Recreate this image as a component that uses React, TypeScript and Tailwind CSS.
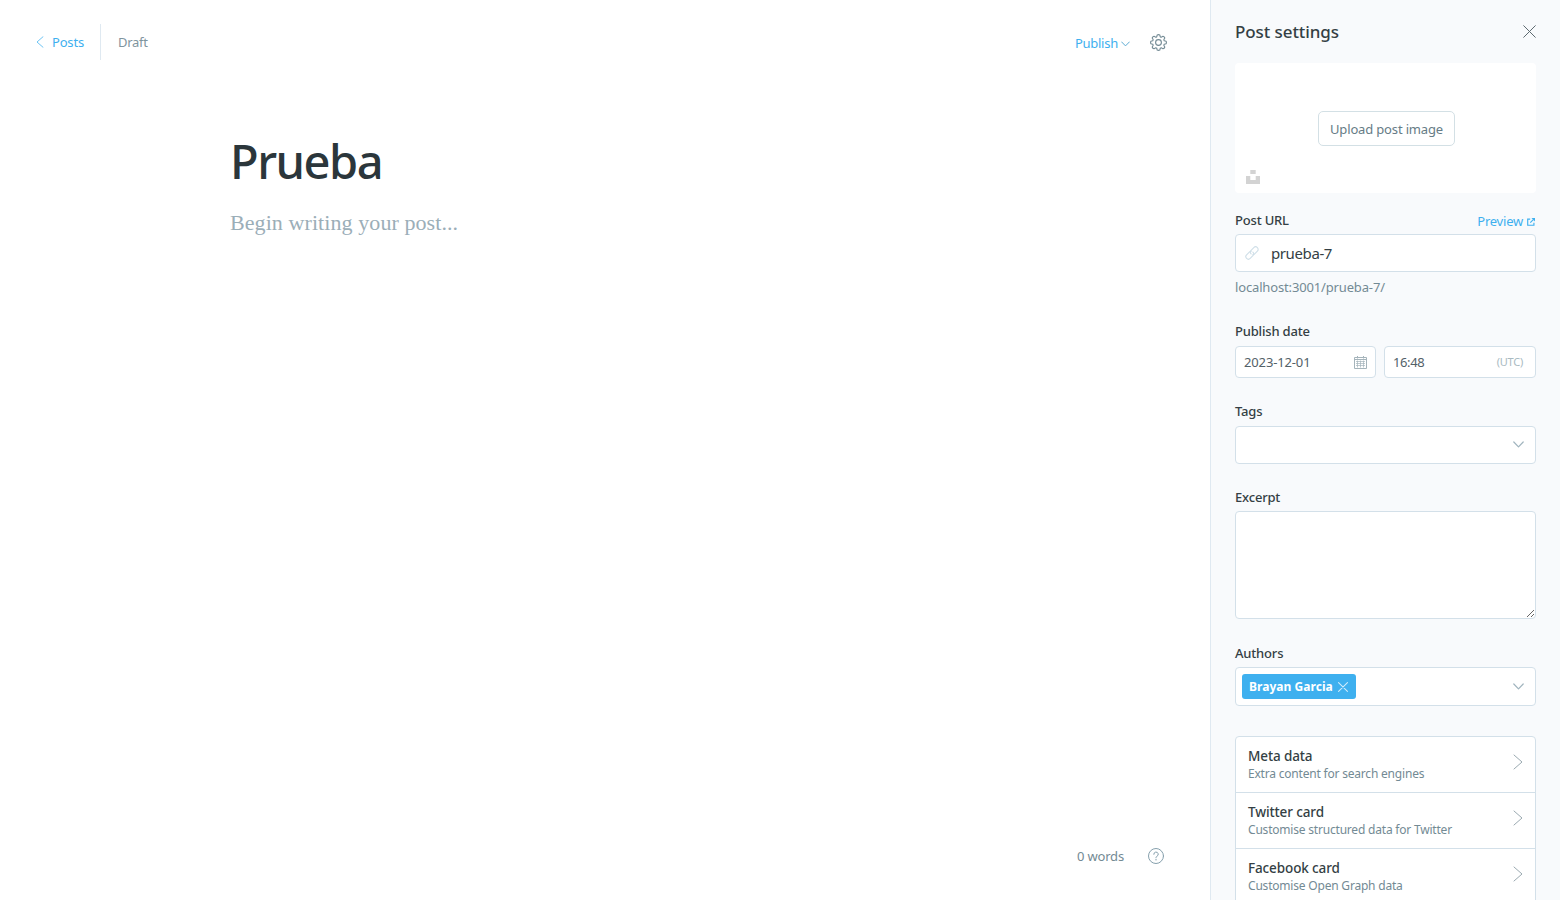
import type { ReactNode } from "react";

type IconProps = { className?: string };

function ChevronDown({ className }: IconProps) {
  return (
    <svg className={className} viewBox="0 0 11 7" fill="none" stroke="currentColor" strokeWidth="1.2" strokeLinecap="round" strokeLinejoin="round">
      <path d="M.8 1 5.5 5.8 10.2 1" />
    </svg>
  );
}

function ChevronRight({ className }: IconProps) {
  return (
    <svg className={className} viewBox="0 0 10 16" fill="none" stroke="currentColor" strokeWidth="1" strokeLinecap="round" strokeLinejoin="round">
      <path d="M1 1 9 8 1 15" />
    </svg>
  );
}

function Cross({ className, width = 1 }: IconProps & { width?: number }) {
  return (
    <svg className={className} viewBox="0 0 13 13" fill="none" stroke="currentColor" strokeWidth={width} strokeLinecap="round">
      <path d="M.7.7 12.3 12.3M12.3.7.7 12.3" />
    </svg>
  );
}

function Gear({ className }: IconProps) {
  return (
    <svg className={className} viewBox="0 0 17 17" fill="none" stroke="currentColor" strokeWidth="1.1" strokeLinejoin="round">
      <circle cx="8.5" cy="8.5" r="2.9" />
      <path d="M7.2.9Q8.5.3 9.8.9L10.2 2.7Q10.9 3.2 11.5 3.1L13 2.2Q14.4 2.6 14.8 4L13.9 5.5Q13.8 6.2 14.3 6.8L16.1 7.2Q16.7 8.5 16.1 9.8L14.3 10.2Q13.8 10.8 13.9 11.5L14.8 13Q14.4 14.4 13 14.8L11.5 13.9Q10.9 13.8 10.2 14.3L9.8 16.1Q8.5 16.7 7.2 16.1L6.8 14.3Q6.1 13.8 5.5 13.9L4 14.8Q2.6 14.4 2.2 13L3.1 11.5Q3.2 10.8 2.7 10.2L.9 9.8Q.3 8.5.9 7.2L2.7 6.8Q3.2 6.2 3.1 5.5L2.2 4Q2.6 2.6 4 2.2L5.5 3.1Q6.1 3.2 6.8 2.7Z" />
    </svg>
  );
}

function Calendar({ className }: IconProps) {
  return (
    <svg className={className} viewBox="0 0 13 13" fill="none" stroke="currentColor" strokeWidth="1">
      <path d="M.5 1.5h12v11H.5zM.5 3.5h12M3.5 0v2.5M9.5 0v2.5" />
      <path d="M2 5.5h9M2 7.5h9M2 9.5h9M3.5 4.5v7M6.5 4.5v7M9.5 4.5v7" strokeWidth=".7" />
    </svg>
  );
}

function LinkIcon({ className }: IconProps) {
  return (
    <svg className={className} viewBox="0 0 14 14" fill="none" stroke="currentColor" strokeWidth="1.1" strokeLinecap="round" strokeLinejoin="round">
      <path d="M6.1 7.9a2.5 2.5 0 0 1 0-3.5L8.8 1.6a2.5 2.5 0 0 1 3.6 3.6L9.7 7.9a2.5 2.5 0 0 1-1.8.7" />
      <path d="M7.9 6.1a2.5 2.5 0 0 1 0 3.5L5.2 12.4a2.5 2.5 0 0 1-3.6-3.6l2.7-2.7a2.5 2.5 0 0 1 1.8-.7" />
    </svg>
  );
}

function ExternalLink({ className }: IconProps) {
  return (
    <svg className={className} viewBox="0 0 9 9" fill="none" stroke="currentColor" strokeWidth="1.3">
      <path d="M3.6 1.2H.8v7h7V5.4" />
      <path d="M3.7 5.3 7.4 1.6" />
      <path d="M5 0h4v4z" fill="currentColor" stroke="none" />
    </svg>
  );
}

function Unsplash({ className }: IconProps) {
  return (
    <svg className={className} viewBox="0 0 14 14" fill="currentColor">
      <path d="M4.3 0h5.4v4H4.3zM0 6h4.3v4h5.4V6H14v8H0z" />
    </svg>
  );
}

function Help({ className }: IconProps) {
  return (
    <svg className={className} viewBox="0 0 16 16" fill="none" stroke="currentColor" strokeLinecap="round">
      <circle cx="8" cy="8" r="7.5" />
      <path d="M5.8 6.3a2.2 2.2 0 1 1 3.2 1.95C8.3 8.6 8 9 8 9.8" />
      <circle cx="8" cy="11.8" r=".7" fill="currentColor" stroke="none" />
    </svg>
  );
}

function Label({ children }: { children: ReactNode }) {
  return <label className="h-[18px] text-[13px] leading-[18px] font-medium tracking-[-0.18px] text-[#343f44]">{children}</label>;
}

const box = "rounded-[4px] border border-[#d3e0e9] bg-white";

const cards = [
  { title: "Meta data", text: "Extra content for search engines" },
  { title: "Twitter card", text: "Customise structured data for Twitter" },
  { title: "Facebook card", text: "Customise Open Graph data" },
];

function Editor() {
  return (
    <main className="flex min-w-0 flex-1 flex-col">
      <header className="flex h-[84px] shrink-0 items-center justify-between pr-[43px] pl-[36px]">
        <div className="flex items-center text-[13px]">
          <a className="flex items-center gap-2 tracking-[-0.18px] text-[#3eb0ef]">
            <ChevronRight className="h-3 w-2 rotate-180" />
            <span className="pt-0.5">Posts</span>
          </a>
          <span className="ml-4 h-9 w-px bg-[#dfe9f1]" />
          <span className="ml-[17px] pt-0.5 tracking-[-0.3px] text-[#7f949e]">Draft</span>
        </div>
        <div className="flex items-center">
          <button className="mt-[3px] flex items-center gap-[3px] text-[13px] tracking-[-0.25px] text-[#3eb0ef]">
            Publish
            <ChevronDown className="h-[6px] w-[9px] text-[#5aa9d2]" />
          </button>
          <Gear className="ml-5 size-[17px] text-[#738a94]" />
        </div>
      </header>
      <div className="flex flex-1 flex-col pt-[45px] pl-[230px]">
        <h1 className="h-16 text-[47px] leading-[64px] font-medium tracking-[-1.5px] text-[#2b363b]">Prueba</h1>
        <p className="mt-[15px] font-['Liberation_Serif',serif] text-[22px] leading-[30px] tracking-[0.08px] text-[#9baeb8]">Begin writing your post...</p>
      </div>
      <footer className="flex h-[88px] shrink-0 items-center justify-end gap-6 pr-[46px] text-[13px] tracking-[-0.18px] text-[#738a94]">
        <span className="pt-0.5">0 words</span>
        <Help className="size-4 text-[#86a0ad]" />
      </footer>
    </main>
  );
}

function Settings() {
  return (
    <aside className="flex w-[350px] shrink-0 flex-col overflow-hidden border-l border-[#dfe9f1] bg-[#f8fafc] px-6">
      <div className="flex h-[63px] shrink-0 items-center justify-between">
        <h4 className="text-[17px] leading-6 font-medium tracking-[-0.08px] text-[#343f44]">Post settings</h4>
        <Cross className="mb-px size-[13px] text-[#5d6a70]" />
      </div>

      <section className="grid h-[130px] shrink-0 grid-cols-1 grid-rows-1 rounded-[4px] bg-white">
        <button className="col-start-1 row-start-1 ml-0.5 flex h-[35px] w-[137px] items-center justify-center self-center justify-self-center rounded-[5px] border border-[#d3e0e5] pt-[3px] text-[13px] tracking-[-0.16px] text-[#667c86]">
          Upload post image
        </button>
        <Unsplash className="col-start-1 row-start-1 mb-[9px] ml-[11px] size-[14px] self-end text-[#d3d3d3]" />
      </section>

      <section className="mt-[18px] flex shrink-0 flex-col">
        <div className="flex h-[23px] justify-between">
          <Label>Post URL</Label>
          <a className="mt-0.5 flex h-[18px] items-center gap-1 pr-px text-[13px] tracking-[-0.22px] text-[#3eb0ef]">
            Preview
            <ExternalLink className="mb-px size-2" />
          </a>
        </div>
        <div className={`${box} flex h-[38px] items-center gap-3 pl-[9px] text-[15px] tracking-[-0.4px] text-[#343f44]`}>
          <LinkIcon className="size-[14px] text-[#cfdfe8]" />
          prueba-7
        </div>
        <p className="mt-[6px] h-[18px] text-[13px] leading-[18px] tracking-[-0.15px] text-[#738a94]">localhost:3001/prueba-7/</p>
      </section>

      <section className="mt-[26px] flex shrink-0 flex-col gap-1.5">
        <Label>Publish date</Label>
        <div className="flex gap-2 text-[13px] text-[#536168]">
          <div className={`${box} flex h-8 w-[141px] items-center justify-between pr-2 pl-2 tracking-[-0.14px]`}>
            <span className="pt-0.5">2023-12-01</span>
            <Calendar className="size-[13px] text-[#a5b4bb]" />
          </div>
          <div className={`${box} flex h-8 flex-1 items-center justify-between pr-3 pl-2 tracking-[-0.4px]`}>
            <span className="pt-0.5">16:48</span>
            <span className="text-[11px] tracking-[-0.25px] text-[#a9bac2]">(UTC)</span>
          </div>
        </div>
      </section>

      <section className="mt-6 flex shrink-0 flex-col gap-1.5">
        <Label>Tags</Label>
        <div className={`${box} flex h-[38px] items-center justify-end pr-[11px]`}>
          <ChevronDown className="mb-px h-[7px] w-[11px] text-[#a0b4be]" />
        </div>
      </section>

      <section className="mt-6 flex shrink-0 flex-col gap-[5px]">
        <Label>Excerpt</Label>
        <textarea className={`${box} block h-[108px] w-full resize-y outline-none`} />
      </section>

      <section className="mt-[25px] flex shrink-0 flex-col gap-[5px]">
        <Label>Authors</Label>
        <div className={`${box} flex h-[39px] items-center justify-between pr-[11px] pl-1.5`}>
          <span className="flex h-[25px] w-[114px] items-center gap-[5px] rounded-[3px] bg-[#3eb0ef] pl-[7px] text-[12px] font-bold tracking-[0.04px] whitespace-nowrap text-white">
            Brayan Garcia
            <Cross className="size-[10px] shrink-0 opacity-75" width={1.4} />
          </span>
          <ChevronDown className="h-[7px] w-[11px] text-[#a0b4be]" />
        </div>
      </section>

      <ul className="mt-[30px] shrink-0 divide-y divide-[#d3e0e9] rounded-[4px] border border-[#d3e0e9] bg-white">
        {cards.map((card) => (
          <li key={card.title} className="flex h-14 justify-between pt-[10px] pr-3 pl-3">
            <div>
              <h5 className="text-[13.5px] leading-[19px] font-medium tracking-[-0.12px] text-[#343f44]">{card.title}</h5>
              <p className="text-[12px] leading-4 tracking-[-0.2px] text-[#738a94]">{card.text}</p>
            </div>
            <ChevronRight className="mt-[7px] h-4 w-[10px] text-[#9aa9b0]" />
          </li>
        ))}
      </ul>
    </aside>
  );
}

export default function App() {
  return (
    <div className="flex h-[900px] w-full overflow-hidden bg-white font-['Noto_Sans',sans-serif]">
      <Editor />
      <Settings />
    </div>
  );
}
